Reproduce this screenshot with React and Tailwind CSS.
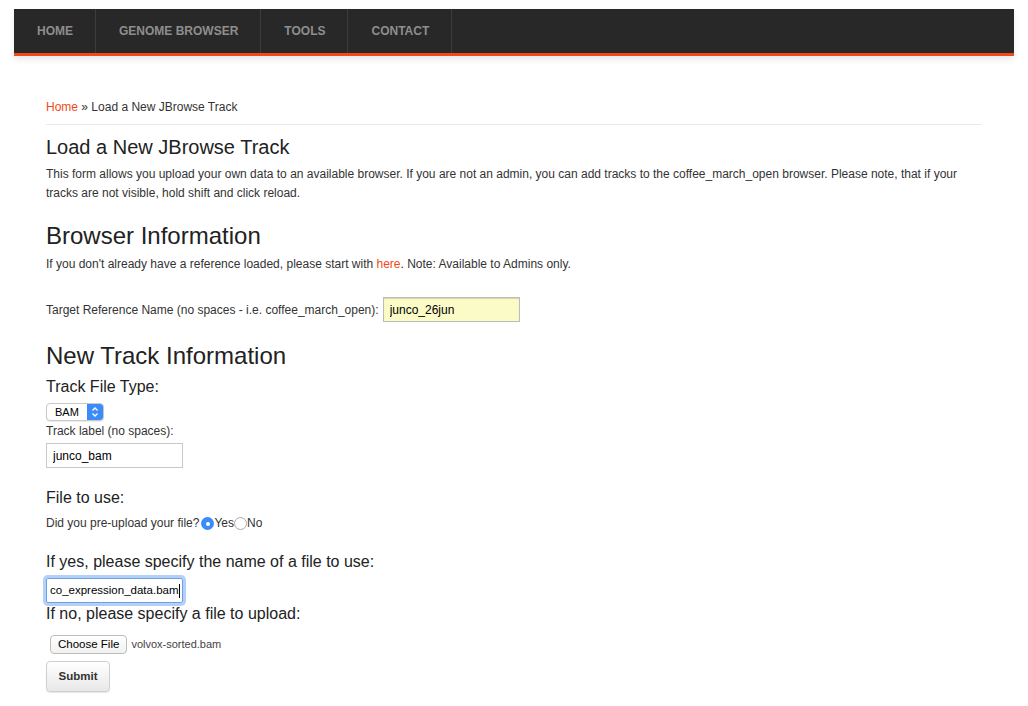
import React, { useState } from 'react';

const font = { fontFamily: '"Liberation Sans", Arial, Helvetica, sans-serif' };

const navItems = ['Home', 'Genome Browser', 'Tools', 'Contact'];

const App = () => {
  const [preUploaded, setPreUploaded] = useState(true);

  return (
    <div className="min-h-screen bg-white text-[#333] text-[12px]" style={font}>
      {/* Nav */}
      <div className="pt-[9px] px-[14px]">
        <div className="bg-[#282828] border-b-[3px] border-[#f2481b] shadow-[0_4px_6px_rgba(0,0,0,0.08)] flex h-[47px]">
          {navItems.map((item) => (
            <a
              key={item}
              href="#"
              className="pl-[23px] pr-[22px] flex items-center uppercase font-bold text-[12px] text-[#8e8e8e] border-r border-[#3c3c3c]"
            >
              {item}
            </a>
          ))}
        </div>
      </div>

      <div className="px-[46px] pt-[44px]">
        {/* Breadcrumb */}
        <div className="pb-[9px] border-b border-[#eaeaea] leading-[15px]">
          <a href="#" className="text-[#f2481b]">Home</a> » Load a New JBrowse Track
        </div>

        <h2 className="text-[20px] text-[#222] leading-[24px] mt-[10px]">Load a New JBrowse Track</h2>
        <p className="leading-[19px] mt-[6px]">
          This form allows you upload your own data to an available browser. If you are not an admin, you can add tracks to the coffee_march_open browser. Please note, that if your tracks are not visible, hold shift and click reload.
        </p>

        <h2 className="text-[24px] text-[#222] leading-[28px] mt-[19px]">Browser Information</h2>
        <p className="leading-[19px] mt-[5px]">
          If you don't already have a reference loaded, please start with <a href="#" className="text-[#f2481b]">here</a>. Note: Available to Admins only.
        </p>

        <div className="flex items-center mt-[23px]">
          <span>Target Reference Name (no spaces - i.e. coffee_march_open):</span>
          <input
            defaultValue="junco_26jun"
            className="ml-[4px] w-[137px] h-[25px] bg-[#fbfbc8] border border-[#bcbcbc] shadow-[inset_0_1px_1px_rgba(0,0,0,0.15)] px-[6px] text-[12px] text-black outline-none"
            style={font}
          />
        </div>

        <h2 className="text-[24px] text-[#222] leading-[28px] mt-[20px]">New Track Information</h2>
        <h3 className="text-[16px] text-[#222] leading-[20px] mt-[7px]">Track File Type:</h3>
        <div className="mt-[6px] flex">
          <div className="flex items-center h-[18px] border border-[#c8c8c8] rounded-[4px] bg-white overflow-hidden shadow-[0_1px_1px_rgba(0,0,0,0.08)]">
            <span className="pl-[8px] pr-[8px] text-[11px] text-black">BAM</span>
            <span className="w-[16px] h-full bg-[#3b8cf7] flex items-center justify-center">
              <svg width="8" height="12" viewBox="0 0 8 12" fill="none" stroke="white" strokeWidth="1.3">
                <path d="M1.5 4.5 L4 2 L6.5 4.5" />
                <path d="M1.5 7.5 L4 10 L6.5 7.5" />
              </svg>
            </span>
          </div>
        </div>
        <div className="leading-[17px] mt-[2px]">Track label (no spaces):</div>
        <input
          defaultValue="junco_bam"
          className="mt-[3px] block w-[137px] h-[25px] border border-[#c8c8c8] px-[6px] text-[12px] text-black outline-none"
          style={font}
        />

        <h3 className="text-[16px] text-[#222] leading-[20px] mt-[20px]">File to use:</h3>
        <div className="flex items-center mt-[8px] leading-[15px]">
          <span>Did you pre-upload your file?</span>
          <button onClick={() => setPreUploaded(true)} className="ml-[2px] flex items-center">
            <span className={`w-[13px] h-[13px] rounded-full flex items-center justify-center ${preUploaded ? 'bg-[#3b8cf7]' : 'border border-[#aaa] bg-white'}`}>
              {preUploaded && <span className="w-[4px] h-[4px] rounded-full bg-white" />}
            </span>
            <span>Yes</span>
          </button>
          <button onClick={() => setPreUploaded(false)} className="flex items-center">
            <span className={`w-[13px] h-[13px] rounded-full flex items-center justify-center ${!preUploaded ? 'bg-[#3b8cf7]' : 'border border-[#aaa] bg-white'}`}>
              {!preUploaded && <span className="w-[4px] h-[4px] rounded-full bg-white" />}
            </span>
            <span>No</span>
          </button>
        </div>

        <h3 className="text-[16px] text-[#222] leading-[20px] mt-[21px]">If yes, please specify the name of a file to use:</h3>
        <div className="mt-[6px] w-[137px] h-[25px] border border-[#6aa2ea] rounded-[2px] shadow-[0_0_0_3px_rgba(90,150,235,0.45)] px-[3px] flex items-center overflow-hidden">
          <span className="text-[11.5px] text-black whitespace-nowrap">co_expression_data.bam</span>
          <span className="w-px h-[14px] bg-black" />
        </div>
        <h3 className="text-[16px] text-[#222] leading-[20px] mt-[1px]">If no, please specify a file to upload:</h3>

        <div className="flex items-center mt-[11px] ml-[4px]">
          <button className="h-[19px] px-[7px] border border-[#bdbdbd] rounded-[4px] bg-gradient-to-b from-white to-[#f1f1f1] text-[11.5px] text-black leading-none">
            Choose File
          </button>
          <span className="ml-[4px] text-[11px] text-[#444]">volvox-sorted.bam</span>
        </div>

        <button className="mt-[7px] w-[64px] h-[31px] border border-[#cfcfcf] rounded-[4px] bg-gradient-to-b from-white to-[#e8e8e8] font-bold text-[11.5px] text-[#333] shadow-[0_1px_1px_rgba(0,0,0,0.1)]">
          Submit
        </button>
      </div>
    </div>
  );
};

export default App;
